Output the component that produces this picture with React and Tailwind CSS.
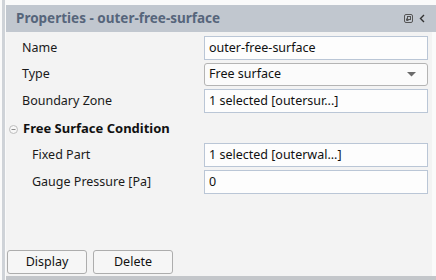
import React from "react";

/* ─── Small pieces ────────────────────────────────────────────── */
function Field({ children }) {
  return (
    <div className="h-[24px] w-[224px] bg-[#fdfdfd] border border-[#bac6d6] flex items-center px-[4px] text-[#111] whitespace-nowrap">
      {children}
    </div>
  );
}

function SelectField({ children }) {
  return (
    <div className="h-[23px] w-[224px] bg-[#fbfbfb] border border-[#b4b4b4] rounded-[3px] flex items-center justify-between pl-[4px] pr-[11px] text-[#111]">
      <span>{children}</span>
      <svg width="9" height="5" viewBox="0 0 9 5">
        <polygon points="0,0 9,0 4.5,4.5" fill="#6b6b6b" />
      </svg>
    </div>
  );
}

function Row({ label, indent = false, children }) {
  return (
    <div className="flex items-center">
      <div className={`w-[198px] shrink-0 text-[#1a1a1a] ${indent ? "pl-[26px]" : "pl-[16px]"}`}>{label}</div>
      {children}
    </div>
  );
}

function Button({ children }) {
  return (
    <button className="h-[24px] w-[80px] rounded-[3px] border border-[#adadad] bg-[#f6f6f6] text-[#111] flex items-center justify-center">
      {children}
    </button>
  );
}

/* ─── Properties panel ────────────────────────────────────────── */
export default function App() {
  return (
    <div
      className="w-[436px] h-[280px] bg-[#fafafa] flex overflow-hidden text-[12.5px]"
      style={{ fontFamily: '"Noto Sans", "Open Sans", sans-serif' }}
    >
      <div className="w-[2px] shrink-0" />
      <div className="w-[3px] shrink-0 bg-[#cfd3d8]" />
      <div className="w-[1px] shrink-0" />

      <div className="flex-1 flex flex-col pt-[5px]">
        {/* Title bar */}
        <div className="h-[27px] bg-[#c1c7cf] flex items-center justify-between pl-[10px] pr-[11px]">
          <span className="font-bold text-[13.5px] text-[#56657b]">Properties - outer-free-surface</span>
          <div className="flex items-center gap-[6px]">
            <svg width="9" height="9" viewBox="0 0 9 9" fill="none" stroke="#555" strokeWidth="1">
              <rect x="0.5" y="0.5" width="8" height="8" rx="1.5" />
              <rect x="3.5" y="2.5" width="3" height="3" />
              <path d="M2.5 4.5v2h2" />
            </svg>
            <svg width="6" height="9" viewBox="0 0 6 9" fill="none" stroke="#333" strokeWidth="1.4">
              <polyline points="5,1 1.5,4.5 5,8" />
            </svg>
          </div>
        </div>

        {/* Body */}
        <div className="flex-1 mr-[4px] bg-[#f3f3f3] flex flex-col pt-[4px] pb-[2px]">
          <div className="flex flex-col gap-[3px]">
            <Row label="Name">
              <Field>outer-free-surface</Field>
            </Row>
            <Row label="Type">
              <SelectField>Free surface</SelectField>
            </Row>
            <Row label="Boundary Zone">
              <Field>1 selected [outersur...]</Field>
            </Row>
            <div className="h-[24px] flex items-center pl-[3px] pt-[2px] gap-[5px]">
              <svg width="9" height="9" viewBox="0 0 9 9" fill="none">
                <circle cx="4.5" cy="4.5" r="4" stroke="#bdbdbd" fill="#f7f7f7" />
                <line x1="2.5" y1="4.5" x2="6.5" y2="4.5" stroke="#8a8a8a" />
              </svg>
              <span className="font-bold text-[13px] text-[#111]">Free Surface Condition</span>
            </div>
            <Row label="Fixed Part" indent>
              <Field>1 selected [outerwal...]</Field>
            </Row>
            <Row label="Gauge Pressure [Pa]" indent>
              <Field>0</Field>
            </Row>
          </div>

          <div className="mt-auto flex gap-[6px] pl-[1px]">
            <Button>Display</Button>
            <Button>Delete</Button>
          </div>
        </div>

        <div className="h-[4px] bg-[#c3c6ca]" />
      </div>
    </div>
  );
}
